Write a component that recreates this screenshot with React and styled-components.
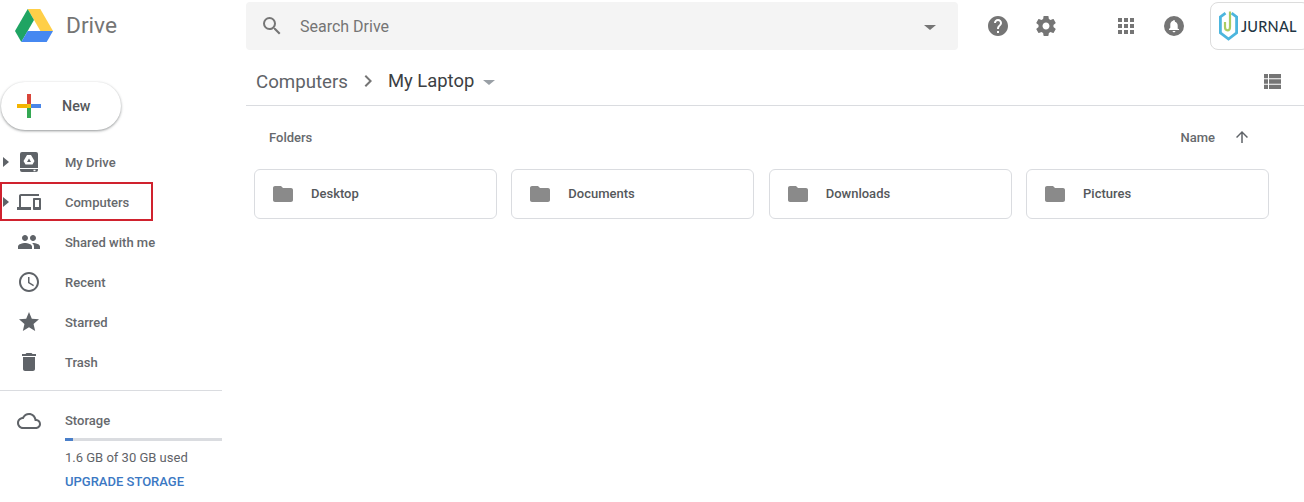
import React from "react";
import styled, { createGlobalStyle } from "styled-components";

const Global = createGlobalStyle`
  html, body { margin: 0; padding: 0; background: #fff; height: 100%; overflow: hidden; }
  body { font-family: Roboto, "Liberation Sans", sans-serif; }
`;

const Page = styled.div`
  width: 1304px;
  height: 502px;
  display: flex;
  flex-direction: column;
  overflow: hidden;
`;
const Header = styled.header`
  height: 56px;
  display: flex;
  align-items: flex-start;
  flex: none;
`;
const Brand = styled.div`
  width: 246px;
  height: 52px;
  flex: none;
  display: flex;
  align-items: center;
  gap: 13px;
  padding-left: 15px;
  box-sizing: border-box;
`;
const BrandName = styled.span`
  font-size: 22.7px;
  color: #757575;
  line-height: 52px;
`;
const Search = styled.div`
  margin-top: 2px;
  width: 712px;
  height: 48px;
  flex: none;
  display: flex;
  align-items: center;
  box-sizing: border-box;
  background: #f4f4f4;
  border-radius: 4px;
  padding: 0 22px 0 14px;
  color: #757575;
`;
const SearchText = styled.span`
  flex: 1;
  font-size: 16px;
  margin-left: 16px;
`;
const HeadIcons = styled.div`
  display: flex;
  align-items: center;
  height: 52px;
  flex: none;
  padding-left: 28px;
  color: #757575;
`;
const Spacer = styled.span`
  width: ${(p) => p.$w}px;
  flex: none;
`;
const LogoBox = styled.div`
  margin: 2px 0 0 24px;
  width: 100px;
  height: 48px;
  flex: none;
  box-sizing: border-box;
  border: 1px solid #dcdcdc;
  border-radius: 8px;
  display: flex;
  align-items: center;
  padding-left: 8px;
  gap: 3px;
  font-family: Lato, Roboto, sans-serif;
  font-size: 14.5px;
  font-weight: 500;
  letter-spacing: 0.2px;
  color: #1f3644;
`;
const Body = styled.div`
  flex: 1;
  display: flex;
  min-height: 0;
`;
const Side = styled.aside`
  width: 246px;
  flex: none;
  box-sizing: border-box;
  padding: 26px 24px 0 0;
`;
const NewButton = styled.button`
  margin-left: 1px;
  width: 120px;
  height: 48px;
  display: flex;
  align-items: center;
  padding: 0 0 0 16px;
  border: 0;
  background: #fff;
  border-radius: 24px;
  box-shadow: 0 1px 3px 0 rgba(60, 64, 67, 0.4), 0 1px 2px 0 rgba(60, 64, 67, 0.2);
  font-family: inherit;
  font-size: 14.3px;
  font-weight: 500;
  color: #55585b;
  gap: 21px;
`;
const Nav = styled.nav`
  margin-top: 12px;
  display: flex;
  flex-direction: column;
`;
const Row = styled.div`
  position: relative;
  height: 40px;
  display: flex;
  align-items: center;
  font-size: 13px;
  font-weight: 500;
  color: #66696d;
  ${(p) =>
    p.$marked &&
    `&::after {
      content: "";
      position: absolute;
      left: 0; top: 0;
      width: 153px; height: 39px;
      box-sizing: border-box;
      border: 2px solid #d0222e;
    }`}
`;
const Caret = styled.span`
  width: 17px;
  flex: none;
  padding-left: 3px;
  box-sizing: border-box;
  display: flex;
  &::before {
    content: "";
    visibility: ${(p) => (p.$show ? "visible" : "hidden")};
    border-left: 6px solid #5f6368;
    border-top: 5px solid transparent;
    border-bottom: 5px solid transparent;
  }
`;
const IconSlot = styled.span`
  width: 24px;
  height: 24px;
  flex: none;
  margin-right: 24px;
  display: flex;
  color: #5f6368;
`;
const Divider = styled.div`
  height: 1px;
  background: #dadce0;
  margin-top: 8px;
`;
const Storage = styled.div`
  display: flex;
  padding-top: 18px;
`;
const StorageIcon = styled(IconSlot)`
  margin-left: 17px;
`;
const StorageBody = styled.div`
  flex: 1;
  display: flex;
  flex-direction: column;
  padding-top: 4px;
`;
const StorageTitle = styled.div`
  font-size: 13px;
  font-weight: 500;
  color: #66696d;
  line-height: 15px;
`;
const Track = styled.div`
  margin-top: 10px;
  height: 3px;
  background: #dadce0;
`;
const Fill = styled.div`
  height: 100%;
  width: 8px;
  background: #4a7fc9;
`;
const Used = styled.div`
  margin-top: 9px;
  font-size: 13px;
  color: #5f6368;
  line-height: 16px;
`;
const Upgrade = styled.div`
  margin-top: 8px;
  font-size: 13px;
  font-weight: 500;
  color: #3b78c3;
  line-height: 16px;
`;
const Main = styled.main`
  flex: 1;
  min-width: 0;
`;
const Toolbar = styled.div`
  height: 50px;
  display: flex;
  align-items: center;
  border-bottom: 1px solid #dadce0;
  padding: 1px 20px 0 10px;
  box-sizing: border-box;
  color: #5f6368;
`;
const Crumb = styled.span`
  font-size: ${(p) => (p.$current ? "18.4px" : "18.7px")};
  line-height: 24px;
  padding-top: ${(p) => (p.$current ? "0" : "1px")};
  color: ${(p) => (p.$current ? "#3c4043" : "#5f6368")};
`;
const Chevron = styled.span`
  display: flex;
  margin: 0 8px;
  color: #757575;
`;
const Drop = styled.span`
  margin-left: 9px;
  margin-top: 2px;
  border-top: 5px solid #9aa0a6;
  border-left: 6px solid transparent;
  border-right: 6px solid transparent;
`;
const SearchDrop = styled(Drop)`
  border-top-color: #757575;
`;
const Grow = styled.span`
  flex: 1;
`;
const ListHead = styled.div`
  display: flex;
  align-items: center;
  height: 24px;
  margin-top: 19px;
  padding: 0 53px 0 23px;
  font-size: 13px;
  font-weight: 500;
  color: #66696d;
`;
const SortIcon = styled.span`
  display: flex;
  margin-left: 18px;
  color: #5f6368;
`;
const Grid = styled.div`
  margin: 20px 0 0 8px;
  width: 1015px;
  display: grid;
  grid-template-columns: repeat(4, 1fr);
  column-gap: 14.4px;
`;
const FolderCard = styled.div`
  height: 50px;
  box-sizing: border-box;
  border: 1px solid #dadce0;
  border-radius: 6px;
  display: flex;
  align-items: center;
  padding: 0 0 1px 16px;
  gap: 16px;
  font-size: 13px;
  font-weight: 500;
  color: #55585b;
  svg { color: #8a8a8a; }
`;

const Icon = ({ d, size = 24, color = "currentColor" }) => (
  <svg width={size} height={size} viewBox="0 0 24 24" fill={color} fillRule="evenodd" style={{ flex: "none", display: "block" }}>
    <path d={d} />
  </svg>
);

const P = {
  search: "M15.5 14h-.79l-.28-.27A6.47 6.47 0 0 0 16 9.5 6.5 6.5 0 1 0 9.5 16c1.61 0 3.09-.59 4.23-1.57l.27.28v.79l5 4.99L20.49 19l-4.99-5zm-6 0C7.01 14 5 11.99 5 9.5S7.01 5 9.5 5 14 7.01 14 9.5 11.99 14 9.5 14z",
  help: "M12 2C6.48 2 2 6.48 2 12s4.48 10 10 10 10-4.48 10-10S17.52 2 12 2zm1 17h-2v-2h2v2zm2.07-7.75l-.9.92C13.45 12.9 13 13.5 13 15h-2v-.5c0-1.1.45-2.1 1.17-2.83l1.24-1.26c.37-.36.59-.86.59-1.41 0-1.1-.9-2-2-2s-2 .9-2 2H8c0-2.21 1.79-4 4-4s4 1.79 4 4c0 .88-.36 1.68-.93 2.25z",
  gear: "M19.43 12.98c.04-.32.07-.64.07-.98s-.03-.66-.07-.98l2.11-1.65c.19-.15.24-.42.12-.64l-2-3.46c-.12-.22-.39-.3-.61-.22l-2.49 1c-.52-.4-1.08-.73-1.69-.98l-.38-2.65C14.46 2.18 14.25 2 14 2h-4c-.25 0-.46.18-.49.42l-.38 2.65c-.61.25-1.17.59-1.69.98l-2.49-1c-.23-.09-.49 0-.61.22l-2 3.46c-.13.22-.07.49.12.64l2.11 1.65c-.04.32-.07.65-.07.98s.03.66.07.98l-2.11 1.65c-.19.15-.24.42-.12.64l2 3.46c.12.22.39.3.61.22l2.49-1c.52.4 1.08.73 1.69.98l.38 2.65c.03.24.24.42.49.42h4c.25 0 .46-.18.49-.42l.38-2.65c.61-.25 1.17-.59 1.69-.98l2.49 1c.23.09.49 0 .61-.22l2-3.46c.12-.22.07-.49-.12-.64l-2.11-1.65zM12 15.5c-1.93 0-3.5-1.57-3.5-3.5s1.57-3.5 3.5-3.5 3.5 1.57 3.5 3.5-1.57 3.5-3.5 3.5z",
  apps: "M4 4h4v4H4zM10 4h4v4h-4zM16 4h4v4h-4zM4 10h4v4H4zM10 10h4v4h-4zM16 10h4v4h-4zM4 16h4v4H4zM10 16h4v4h-4zM16 16h4v4h-4z",
  bell: "M12 2a10 10 0 1 0 0 20 10 10 0 0 0 0-20zm0 16.3c-.8 0-1.4-.6-1.4-1.3h2.8c0 .7-.6 1.3-1.4 1.3zm5-2.3H7v-1l1.3-1.3v-3c0-1.9 1-3.4 2.8-3.9V7c0-.5.4-.9.9-.9s.9.4.9.9v.8c1.8.5 2.8 2 2.8 3.9v3L17 15v1z",
  list: "M4 5h4v4.3H4zM9 5h12v4.3H9zM4 10.3h4v4.4H4zM9 10.3h12v4.4H9zM4 15.7h4V20H4zM9 15.7h12V20H9z",
  chevron: "M8.59 16.59L13.17 12 8.59 7.41 10 6l6 6-6 6z",
  up: "M4 12l1.41 1.41L11 7.83V20h2V7.83l5.58 5.59L20 12l-8-8-8 8z",
  drive: "M5 2h14a2 2 0 0 1 2 2v14H3V4a2 2 0 0 1 2-2zM10 5L6.5 11l2 3.5h7l2-3.5L14 5h-4zM12 8.5L14 12h-4l2-3.5zM3 19h18v1a2 2 0 0 1-2 2H5a2 2 0 0 1-2-2v-1zM16.5 19.8v1.4h2v-1.4h-2z",
  devices: "M4 6h18V4H4c-1.1 0-2 .9-2 2v11H0v3h14v-3H4V6zm19 2h-6c-.55 0-1 .45-1 1v10c0 .55.45 1 1 1h6c.55 0 1-.45 1-1V9c0-.55-.45-1-1-1zm-1 9h-4v-7h4v7z",
  people: "M16 11c1.66 0 2.99-1.34 2.99-3S17.66 5 16 5c-1.66 0-3 1.34-3 3s1.34 3 3 3zm-8 0c1.66 0 2.99-1.34 2.99-3S9.66 5 8 5C6.34 5 5 6.34 5 8s1.34 3 3 3zm0 2c-2.33 0-7 1.17-7 3.5V19h14v-2.5c0-2.33-4.67-3.5-7-3.5zm8 0c-.29 0-.62.02-.97.05 1.16.84 1.97 1.97 1.97 3.45V19h6v-2.5c0-2.33-4.67-3.5-7-3.5z",
  clock: "M11.99 2C6.47 2 2 6.48 2 12s4.47 10 9.99 10C17.52 22 22 17.52 22 12S17.52 2 11.99 2zM12 20c-4.42 0-8-3.58-8-8s3.58-8 8-8 8 3.58 8 8-3.58 8-8 8zm.5-13H11v6l5.25 3.15.75-1.23-4.5-2.67z",
  star: "M12 17.27L18.18 21l-1.64-7.03L22 9.24l-7.19-.61L12 2 9.19 8.63 2 9.24l5.46 4.73L5.82 21z",
  trash: "M6 19c0 1.1.9 2 2 2h8c1.1 0 2-.9 2-2V7H6v12zM19 4h-3.5l-1-1h-5l-1 1H5v2h14V4z",
  cloud: "M19.35 10.04C18.67 6.59 15.64 4 12 4 9.11 4 6.6 5.64 5.35 8.04 2.34 8.36 0 10.91 0 14c0 3.31 2.69 6 6 6h13c2.76 0 5-2.24 5-5 0-2.64-2.05-4.78-4.65-4.96zM19 18H6c-2.21 0-4-1.79-4-4 0-2.05 1.53-3.76 3.56-3.97l1.07-.11.5-.95C8.08 7.14 9.94 6 12 6c2.62 0 4.88 1.86 5.39 4.43l.3 1.5 1.53.11c1.56.1 2.78 1.41 2.78 2.96 0 1.65-1.35 3-3 3z",
  folder: "M10 4H4c-1.1 0-1.99.9-1.99 2L2 18c0 1.1.9 2 2 2h16c1.1 0 2-.9 2-2V8c0-1.1-.9-2-2-2h-8l-2-2z",
};

const DriveLogo = () => (
  <svg width="38" height="34" viewBox="0 0 38 34" style={{ flex: "none" }}>
    <path d="M12.7 0h12.6L38 22H25.4z" fill="#ffcf48" />
    <path d="M12.7 0L0 22l6.3 11L19 11z" fill="#1fa463" />
    <path d="M6.3 33h25.4L38 22H12.6z" fill="#4688f1" />
  </svg>
);

const PlusIcon = () => (
  <svg width="24" height="24" viewBox="0 0 24 24" style={{ flex: "none" }}>
    <path d="M10 0h4v10h-4z" fill="#d9453a" />
    <path d="M14 10h10v4H14z" fill="#4a86e8" />
    <path d="M10 14h4v10h-4z" fill="#34a853" />
    <path d="M0 10h10v4H0z" fill="#f4b400" />
    <path d="M10 10h4v4h-4z" fill="#f4c20d" />
  </svg>
);

const JurnalMark = () => (
  <svg width="19" height="30" viewBox="0 0 19 30" style={{ flex: "none" }}>
    <path d="M6.5 2.2L1.4 6v15.8l8.1 6.2 8.1-6.2V6l-5-3.8" fill="none" stroke="#4cb6de" strokeWidth="2.8" />
    <path d="M11 0.5v15.2c0 2.3-1 3.6-2.4 3.6S6 18 6 16V11" fill="none" stroke="#a9cc62" strokeWidth="2.2" />
  </svg>
);

const navItems = [
  { label: "My Drive", d: P.drive, caret: true },
  { label: "Computers", d: P.devices, caret: true, marked: true },
  { label: "Shared with me", d: P.people },
  { label: "Recent", d: P.clock },
  { label: "Starred", d: P.star },
  { label: "Trash", d: P.trash },
];
const folders = ["Desktop", "Documents", "Downloads", "Pictures"];

export default function App() {
  return (
    <Page>
      <Global />
      <Header>
        <Brand>
          <DriveLogo />
          <BrandName>Drive</BrandName>
        </Brand>
        <Search>
          <Icon d={P.search} />
          <SearchText>Search Drive</SearchText>
          <SearchDrop />
        </Search>
        <HeadIcons>
          <Icon d={P.help} />
          <Spacer $w={24} />
          <Icon d={P.gear} />
          <Spacer $w={56} />
          <Icon d={P.apps} />
          <Spacer $w={24} />
          <Icon d={P.bell} />
        </HeadIcons>
        <LogoBox>
          <JurnalMark />
          JURNAL
        </LogoBox>
      </Header>
      <Body>
        <Side>
          <NewButton>
            <PlusIcon />
            New
          </NewButton>
          <Nav>
            {navItems.map((n) => (
              <Row key={n.label} $marked={n.marked}>
                <Caret $show={n.caret} />
                <IconSlot>
                  <Icon d={n.d} />
                </IconSlot>
                {n.label}
              </Row>
            ))}
          </Nav>
          <Divider />
          <Storage>
            <StorageIcon>
              <Icon d={P.cloud} />
            </StorageIcon>
            <StorageBody>
              <StorageTitle>Storage</StorageTitle>
              <Track>
                <Fill />
              </Track>
              <Used>1.6 GB of 30 GB used</Used>
              <Upgrade>UPGRADE STORAGE</Upgrade>
            </StorageBody>
          </Storage>
        </Side>
        <Main>
          <Toolbar>
            <Crumb>Computers</Crumb>
            <Chevron>
              <Icon d={P.chevron} />
            </Chevron>
            <Crumb $current>My Laptop</Crumb>
            <Drop />
            <Grow />
            <Icon d={P.list} color="#757575" />
          </Toolbar>
          <ListHead>
            Folders
            <Grow />
            Name
            <SortIcon>
              <Icon d={P.up} size={18} />
            </SortIcon>
          </ListHead>
          <Grid>
            {folders.map((f) => (
              <FolderCard key={f}>
                <Icon d={P.folder} />
                {f}
              </FolderCard>
            ))}
          </Grid>
        </Main>
      </Body>
    </Page>
  );
}
